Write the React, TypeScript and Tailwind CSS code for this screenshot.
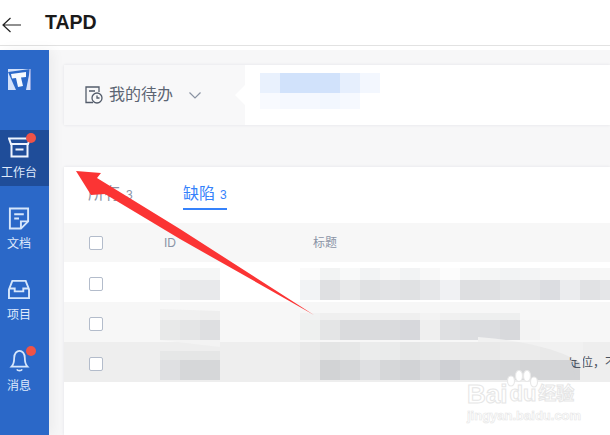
import React from 'react';

const CJK = "font-['Liberation_Sans','Noto_Sans_CJK_SC',sans-serif]";

const NavItem = ({ label, active, dot, children }: { label: string; active?: boolean; dot?: boolean; children: React.ReactNode }) => (
  <div className={`h-[56px] mb-[15px] w-[49px] ${active ? 'bg-[#1f4d99]' : ''}`}>
    <div className="relative w-[38px] h-full flex flex-col items-center justify-end pb-[5px]">
      {children}
      {dot && <span className="absolute top-[3px] right-[2px] w-[10px] h-[10px] rounded-full bg-[#ef5347]" />}
      <span className="text-[12px] leading-[16px] mt-[3px] text-[#dfeafc] whitespace-nowrap">{label}</span>
    </div>
  </div>
);

const Sidebar = () => (
  <aside className="w-[49px] shrink-0 bg-[#2b68c8] shadow-[4px_0_12px_rgba(0,0,0,0.05)] z-10">
    <div className="h-[80px] pt-[19px] pl-[8px]">
      <svg width="23" height="22" viewBox="0 0 23 22">
        <rect x="0" y="0" width="22" height="21" fill="#d3e1fa" />
        <path d="M0 3 L22 0 V1 L18 21 H8 Z" fill="#2b68c8" />
        <path d="M3 5 L18 3 L18 8 L13 8.5 L15 17 L10 18 L8 9 L4 9.5 Z" fill="#f5f9ff" />
        <path d="M22 0 V21" stroke="#e6d9f8" strokeWidth="1" />
      </svg>
    </div>
    <NavItem label="工作台" active dot>
      <svg width="23" height="21" viewBox="0 0 23 21" fill="none" stroke="#eef4fe" strokeWidth="2" className="mb-[4px]">
        <path d="M1 1.5 H22 L20 7 H3 Z" />
        <path d="M3.5 7 V19.5 H19.5 V7" />
        <path d="M7.5 12.5 H15.5" />
      </svg>
    </NavItem>
    <NavItem label="文档">
      <svg width="22" height="23" viewBox="0 0 22 24" fill="none" stroke="#d6e6fb" strokeWidth="2" className="mb-[3px]">
        <path d="M13 22.5 H1.5 V1.5 H20.5 V15 Z" />
        <path d="M6 7.5 H16 M6 12 H11" />
        <path d="M13 22.5 V15 H20.5" />
      </svg>
    </NavItem>
    <NavItem label="项目">
      <svg width="24" height="21" viewBox="0 0 24 22" fill="none" stroke="#d6e6fb" strokeWidth="2" className="mb-[4px]">
        <path d="M1.5 11 L5 2 H19 L22.5 11 V20 H1.5 Z" />
        <path d="M1.5 10 H7.5 V13 H16.5 V10 H22.5" />
      </svg>
    </NavItem>
    <NavItem label="消息" dot>
      <svg width="21" height="23" viewBox="0 0 22 26" fill="none" stroke="#d6e6fb" strokeWidth="2" className="mb-[3px]">
        <path d="M2 20 C5 17 5 14 5 10 C5 5 8 2 11 2 C14 2 17 5 17 10 C17 14 17 17 20 20 Z" />
        <path d="M8 23 C9 25 13 25 14 23" />
      </svg>
    </NavItem>
  </aside>
);

const Checkbox = () => (
  <span className="block w-[14px] h-[14px] bg-white border border-[#b3bccb] rounded-[2px]" />
);

type Strip = { pad: string; top: string[]; topH: string; low: string[] };

const Mosaic = ({ pad, top, topH, low }: Strip) => (
  <div className={`h-full ${pad}`}>
    <div className={`flex ${topH}`}>
      {top.map((c, i) => <span key={i} className={`w-[20px] shrink-0 ${c}`} />)}
    </div>
    <div className="flex h-[20px]">
      {low.map((c, i) => <span key={i} className={`w-[20px] shrink-0 ${c}`} />)}
    </div>
  </div>
);

const rows: { bg: string; id: Strip; title: Strip; tail?: string }[] = [
  {
    bg: 'bg-white',
    id: {
      pad: 'pt-[6px]', topH: 'h-[12px]',
      top: ['bg-[#f6f7f7]', 'bg-[#f5f6f6]', 'bg-[#f5f6f6]'],
      low: ['bg-[#eff0f2]', 'bg-[#e9eaeb]', 'bg-[#e8e9eb]'],
    },
    title: {
      pad: 'pt-[6px]', topH: 'h-[12px]',
      top: ['bg-[#fafafa]', 'bg-[#f2f3f3]', 'bg-[#f8f9f9]', 'bg-[#f2f3f4]', 'bg-[#f7f7f7]', 'bg-[#f2f3f4]', 'bg-[#f8f8f8]', 'bg-[#fcfcfc]', 'bg-[#f6f7f7]', 'bg-[#f4f5f5]', 'bg-[#f2f3f4]', 'bg-[#f3f4f5]', 'bg-[#f6f6f6]', 'bg-[#f5f5f5]', 'bg-[#f6f6f6]', 'bg-[#f7f7f7]'],
      low: ['bg-[#f2f3f5]', 'bg-[#dfe0e2]', 'bg-[#e8e9ea]', 'bg-[#e0e1e3]', 'bg-[#e2e3e5]', 'bg-[#e0e1e3]', 'bg-[#e6e7e9]', 'bg-[#f0f1f3]', 'bg-[#dedfe1]', 'bg-[#dfe0e2]', 'bg-[#e3e4e6]', 'bg-[#e2e3e5]', 'bg-[#dcdde1]', 'bg-[#ebecee]', 'bg-[#e1e2e4]', 'bg-[#e5e6e8]'],
    },
  },
  {
    bg: 'bg-[#f7f7f7]',
    id: {
      pad: 'pt-[4px]', topH: 'h-[14px]',
      top: ['bg-[#f1f1f1]', 'bg-[#f0f0f0]', 'bg-[#eeeeee]'],
      low: ['bg-[#e8e9e9]', 'bg-[#e4e5e6]', 'bg-[#dedfe1]'],
    },
    title: {
      pad: 'pt-[11px]', topH: 'h-[7px]',
      top: ['bg-[#f1f2f2]', 'bg-[#efefef]', 'bg-[#f0f0f0]', 'bg-[#f0f0f0]', 'bg-[#f0f0f0]', 'bg-[#efefef]', 'bg-[#f3f3f3]', 'bg-[#f0f0f0]', 'bg-[#eeefef]', 'bg-[#eeefef]', 'bg-[#eeefef]', 'bg-[#f7f7f7]'],
      low: ['bg-[#eef0ef]', 'bg-[#e4e5e6]', 'bg-[#dadbdd]', 'bg-[#dadbdd]', 'bg-[#dadbdd]', 'bg-[#d7d8dc]', 'bg-[#efefef]', 'bg-[#dfe0e2]', 'bg-[#dcdde0]', 'bg-[#dcdde0]', 'bg-[#d8d9dc]', 'bg-[#f3f3f3]'],
    },
  },
  {
    bg: 'bg-[#eeeeee]',
    id: {
      pad: 'pt-[9px]', topH: 'h-[9px]',
      top: ['bg-[#e6e7e7]', 'bg-[#e5e6e6]', 'bg-[#e5e6e6]'],
      low: ['bg-[#dfe0e2]', 'bg-[#d6d7d9]', 'bg-[#d6d7d9]'],
    },
    title: {
      pad: 'pt-0', topH: 'h-[18px]',
      top: ['bg-[#e9e9e9]', 'bg-[#e4e5e5]', 'bg-[#e6e7e7]', 'bg-[#ebecec]', 'bg-[#eaebeb]', 'bg-[#e6e7e7]', 'bg-[#e8e9e9]', 'bg-[#eaeaea]', 'bg-[#e9e9e9]', 'bg-[#e9e9e9]', 'bg-[#ebebeb]', 'bg-[#ebebeb]', 'bg-[#e9e9e9]', 'bg-[#e9e9e9]'],
      low: ['bg-[#e6e6e7]', 'bg-[#d2d3d5]', 'bg-[#d6d7d9]', 'bg-[#dfe0e2]', 'bg-[#d6d7d9]', 'bg-[#d2d3d6]', 'bg-[#dadbdd]', 'bg-[#cfd0d4]', 'bg-[#d9dadc]', 'bg-[#d8d9db]', 'bg-[#d6d7d9]', 'bg-[#d3d4d6]', 'bg-[#d4d5d7]', 'bg-[#d3d4d6]'],
    },
    tail: '定位，不',
  },
];

const App = () => (
  <div className={`relative w-[610px] h-[435px] overflow-hidden bg-white ${CJK}`}>
    <header className="h-[46px] border-b border-[#e2e2e2] flex items-center pl-[2px]">
      <svg width="20" height="16" viewBox="0 0 20 16" fill="none" stroke="#222" strokeWidth="1.2" className="mt-[4px]">
        <path d="M19 8 H1 M8.5 1 L1 8 L8.5 15" />
      </svg>
      <span className="ml-[23px] text-[19.5px] font-bold text-[#1a1a1a] leading-none">TAPD</span>
    </header>

    <div className="flex mt-[4px] h-[385px]">
      <Sidebar />
      <main className="flex-1 min-w-0 bg-[#f7f7f8] pl-[15px] pt-[15px]">
        <section className="h-[60px] bg-white shadow-[0_0_3px_rgba(40,50,80,0.1)] flex items-center">
          <div className="w-[181px] h-[60px] bg-[#f8f8f9] flex items-center pl-[21px] [clip-path:polygon(0_0,181px_0,181px_20px,171px_30px,181px_40px,181px_100%,0_100%)]">
            <svg width="18" height="18" viewBox="0 0 18 18" fill="none" stroke="#535c6b" strokeWidth="1.3">
              <path d="M8 16.5 H1 V1 H14 V6" />
              <path d="M4 5 H10" />
              <circle cx="12" cy="12" r="5" />
              <path d="M12 9.5 V12 H14.5" />
            </svg>
            <span className="ml-[6px] text-[16px] leading-none text-[#5c6573]">我的待办</span>
            <svg width="12" height="7" viewBox="0 0 12 7" fill="none" stroke="#8a93a3" strokeWidth="1.2" className="ml-[16px]">
              <path d="M0.5 0.5 L6 6 L11.5 0.5" />
            </svg>
          </div>
          <div className="ml-[15px] -mt-[9px]">
            <div className="flex h-[20px]">
              <span className="w-[20px] bg-[#e9f1fd]" />
              <span className="w-[60px] bg-[#d1e2fb]" />
              <span className="w-[20px] bg-[#e6effd]" />
              <span className="w-[20px] bg-[#f3f7fe]" />
            </div>
            <div className="flex h-[16px]">
              <span className="w-[20px] bg-[#f8fafe]" />
              <span className="w-[40px] bg-[#f5f8fe]" />
              <span className="w-[20px] bg-[#f2f7fe]" />
              <span className="w-[20px] bg-[#f6f9fe]" />
            </div>
          </div>
        </section>

        <section className="mt-[42px] h-[268px] bg-white shadow-[0_0_3px_rgba(40,50,80,0.1)]">
          <div className="h-[56px] flex items-start pl-[24px] pt-[16px]">
            <div className="w-[95px] flex items-baseline text-[#8a94a6]">
              <span className="text-[16px] leading-[22px]">所有</span>
              <span className="ml-[6px] text-[12px]">3</span>
            </div>
            <div className="relative flex items-baseline text-[#3582fb] h-[27px] w-[44px] border-b-2 border-[#3582fb]">
              <span className="text-[16px] leading-[22px]">缺陷</span>
              <span className="ml-[5px] text-[12px]">3</span>
            </div>
          </div>
          <div className="h-[39px] bg-[#f7f7f7] grid grid-cols-[96px_140px_1fr] items-center text-[12px] text-[#8a94a6]">
            <div className="pl-[25px]"><Checkbox /></div>
            <span className="pl-[4px]">ID</span>
            <span className="pl-[13px]">标题</span>
          </div>
          {rows.map((row, i) => (
            <div key={i} className={`h-[40px] grid grid-cols-[96px_140px_1fr] overflow-hidden ${row.bg}`}>
              <div className="pl-[25px] pt-[4px] flex items-center"><Checkbox /></div>
              <Mosaic {...row.id} />
              <div className="relative h-full">
                <Mosaic {...row.title} />
                {row.tail && (
                  <span className="absolute left-[269px] top-[13px] text-[12px] leading-[16px] text-[#4a5260] whitespace-nowrap">{row.tail}</span>
                )}
              </div>
            </div>
          ))}
        </section>
      </main>
    </div>

    {/* 马赛克边缘和红色箭头，盖在页面上面 */}
    <svg width="610" height="435" viewBox="0 0 610 435" className="absolute inset-0 pointer-events-none">
      <path d="M160 340 L220 340 V347 Z" fill="#f3f3f3" />
      <path d="M160 306 V309 L220 311 V306 Z" fill="#f7f7f7" />
      <path d="M478 337 C520 340 565 350 583 365 V342 H478 Z" fill="#f1f1f1" />
      <path d="M560 360 H569 C571 362 574 367 575 380 H560 Z" fill="#d3d4d6" />
      <polygon points="76,171 101,173 97,178 180,229 314,315 180,239 105,194 91,195" fill="#fb3434" />
    </svg>

    {/* 水印 */}
    <div className="absolute left-[467px] top-[370px] w-[110px] pointer-events-none">
      <svg width="34" height="20" viewBox="0 0 34 20" fill="#ffffff" stroke="#e8e8e8" strokeWidth="1.2" className="absolute left-[38px] top-0">
        <ellipse cx="6" cy="11" rx="3.5" ry="5" />
        <ellipse cx="14" cy="6" rx="3.5" ry="5.5" />
        <ellipse cx="22" cy="6" rx="3.5" ry="5.5" />
        <ellipse cx="29" cy="12" rx="3.5" ry="5" />
      </svg>
      <div className="flex items-center h-[20px] mt-[14px] text-[26px] font-bold leading-none text-white [-webkit-text-stroke:1px_#e6e6e6]">
        <span>Bai</span>
        <span className="ml-[2px] text-[22px]">du</span>
        <span className="ml-[2px] text-[18px]">经验</span>
      </div>
      <div className="mt-[5px] text-[13px] font-bold leading-[14px] text-white [-webkit-text-stroke:0.6px_#e6e6e6] whitespace-nowrap">jingyan.baidu.com</div>
    </div>
  </div>
);

export default App;
